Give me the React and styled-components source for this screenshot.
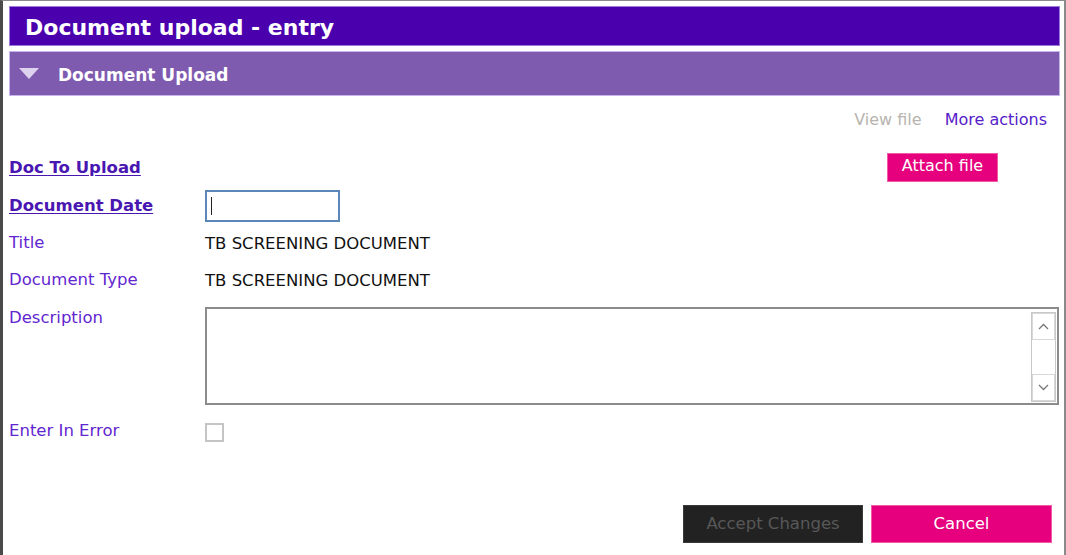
import React from 'react';
import styled, { createGlobalStyle } from 'styled-components';

const GlobalStyle = createGlobalStyle`
	html, body {
		margin: 0;
		padding: 0;
		background: #ffffff;
	}
	body {
		font-family: 'DejaVu Sans', Verdana, sans-serif;
	}
`;

const UploadEntry = () => {
	return (
		<React.Fragment>
			<GlobalStyle />
			<Frame>
				<TitleBar>Document upload - entry</TitleBar>
				<SectionBar>
					<Caret />
					<span>Document Upload</span>
				</SectionBar>

				<ActionLinks>
					<ActionLink disabled>View file</ActionLink>
					<ActionLink>More actions</ActionLink>
				</ActionLinks>

				<Form>
					<Row height={38}>
						<Label required>Doc To Upload</Label>
						<Field>
							<AttachButton>Attach file</AttachButton>
						</Field>
					</Row>
					<Row height={38}>
						<Label required>Document Date</Label>
						<Field>
							<DateInput>
								<CursorMark />
							</DateInput>
						</Field>
					</Row>
					<Row height={36}>
						<Label>Title</Label>
						<Value>TB SCREENING DOCUMENT</Value>
					</Row>
					<Row height={38}>
						<Label>Document Type</Label>
						<Value>TB SCREENING DOCUMENT</Value>
					</Row>
					<Row height={98} top gap={8}>
						<Label>Description</Label>
						<TextBox>
							<Scroller>
								<ScrollBtn>
									<svg width="11" height="7" viewBox="0 0 11 7">
										<path d="M1 6 L5.5 1.5 L10 6" fill="none" stroke="#777" strokeWidth="1.3" />
									</svg>
								</ScrollBtn>
								<ScrollTrack />
								<ScrollBtn>
									<svg width="11" height="7" viewBox="0 0 11 7">
										<path d="M1 1 L5.5 5.5 L10 1" fill="none" stroke="#777" strokeWidth="1.3" />
									</svg>
								</ScrollBtn>
							</Scroller>
						</TextBox>
					</Row>
					<Row height={26} gap={13}>
						<Label>Enter In Error</Label>
						<Field>
							<CheckBox />
						</Field>
					</Row>
				</Form>

				<Footer>
					<FooterButton disabled>Accept Changes</FooterButton>
					<FooterButton>Cancel</FooterButton>
				</Footer>
			</Frame>
		</React.Fragment>
	);
};

export default UploadEntry;

const Frame = styled.div`
	box-sizing: border-box;
	width: 1066px;
	height: 555px;
	border-top: 1px solid #8a8a8a;
	border-left: 3px solid #4a4a4a;
	border-right: 2px solid #8a8a8a;
	padding: 5px 4px 0 6px;
	display: flex;
	flex-direction: column;
	overflow: hidden;
`;

const TitleBar = styled.div`
	box-sizing: border-box;
	height: 40px;
	background: #4b00ad;
	border: 1px solid #9a7be0;
	color: #ffffff;
	font-weight: bold;
	font-size: 22px;
	padding: 3px 0 0 15px;
	display: flex;
	align-items: center;
`;

const SectionBar = styled.div`
	box-sizing: border-box;
	height: 45px;
	margin-top: 5px;
	background: #7f5bb0;
	border: 1px solid #c6b4ec;
	color: #ffffff;
	font-weight: bold;
	font-size: 17px;
	display: flex;
	align-items: center;
	padding: 2px 0 0 9px;
	gap: 19px;
`;

const Caret = styled.span`
	width: 0;
	height: 0;
	border-left: 10px solid transparent;
	border-right: 10px solid transparent;
	border-top: 11px solid #ddd3ef;
	margin-top: -2px;
`;

const ActionLinks = styled.div`
	display: flex;
	justify-content: flex-end;
	gap: 23px;
	padding: 13px 13px 0 0;
	line-height: 22px;
`;

const ActionLink = styled.span`
	font-size: 16px;
	color: ${props => (props.disabled ? '#b8b4b0' : '#5520c8')};
	cursor: pointer;
`;

const Form = styled.div`
	display: flex;
	flex-direction: column;
	padding-top: 18px;
`;

const Row = styled.div`
	display: grid;
	grid-template-columns: 196px 1fr;
	height: ${props => props.height}px;
	margin-top: ${props => props.gap || 0}px;
	align-items: ${props => (props.top ? 'start' : 'center')};
`;

const Label = styled.div`
	font-size: 16.5px;
	line-height: 22px;
	color: ${props => (props.required ? '#4a16b2' : '#6226d0')};
	font-weight: ${props => (props.required ? 'bold' : 'normal')};
	text-decoration: ${props => (props.required ? 'underline' : 'none')};
	text-underline-offset: 2px;
`;

const Field = styled.div`
	display: flex;
	align-items: center;
`;

const Value = styled.div`
	font-size: 16.5px;
	color: #111111;
`;

const AttachButton = styled.button`
	margin-left: 682px;
	margin-top: -2px;
	width: 111px;
	height: 29px;
	border: 1px solid #f25aa8;
	background: #e6007e;
	color: #ffffff;
	font-family: inherit;
	font-size: 16px;
	padding: 0 0 4px;
`;

const DateInput = styled.div`
	box-sizing: border-box;
	width: 135px;
	height: 32px;
	border: 2px solid #5a86b8;
	display: flex;
	align-items: center;
	padding-left: 4px;
`;

const CursorMark = styled.span`
	width: 1px;
	height: 18px;
	background: #222222;
`;

const TextBox = styled.div`
	box-sizing: border-box;
	width: 854px;
	height: 98px;
	border: 2px solid #8c8c8c;
	display: flex;
	justify-content: flex-end;
	padding: 3px 1px 1px 0;
`;

const Scroller = styled.div`
	width: 23px;
	display: flex;
	flex-direction: column;
	border: 1px solid #c8c8c8;
`;

const ScrollBtn = styled.div`
	height: 25px;
	display: flex;
	align-items: center;
	justify-content: center;
	border: 1px solid #d8d8d8;
`;

const ScrollTrack = styled.div`
	flex: 1;
`;

const CheckBox = styled.div`
	box-sizing: border-box;
	width: 19px;
	height: 19px;
	border: 2px solid #c4c4c4;
	margin-top: 2px;
`;

const Footer = styled.div`
	display: flex;
	justify-content: flex-end;
	gap: 8px;
	padding-right: 8px;
	margin-top: 61px;
`;

const FooterButton = styled.button`
	box-sizing: border-box;
	width: ${props => (props.disabled ? '180px' : '181px')};
	height: 38px;
	border: 1px solid ${props => (props.disabled ? '#3a3a3a' : '#f25aa8')};
	background: ${props => (props.disabled ? '#222222' : '#e6007e')};
	color: ${props => (props.disabled ? '#585858' : '#ffffff')};
	font-family: inherit;
	font-size: 16.5px;
	padding: 0 0 2px;
`;
